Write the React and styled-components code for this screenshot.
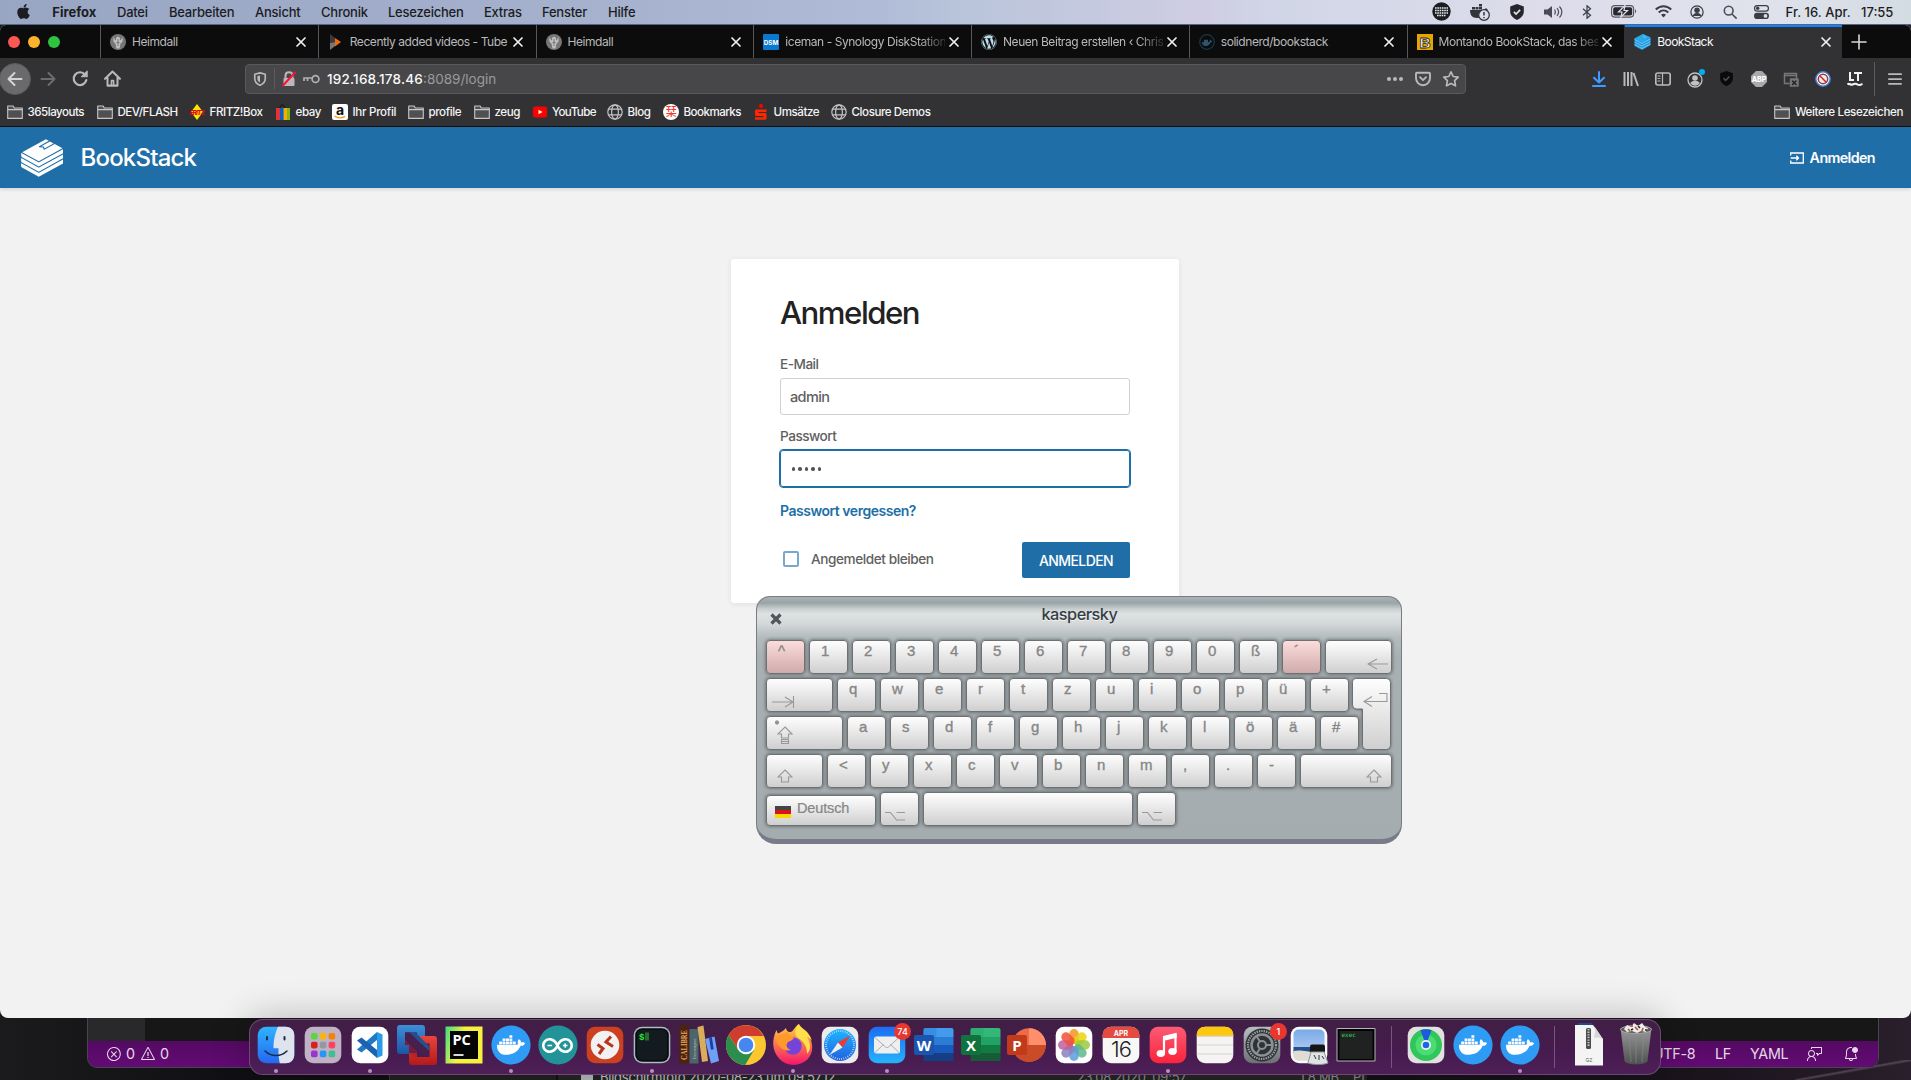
import React from "react";
import styled, { createGlobalStyle, css } from "styled-components";
import { FaApple, FaDocker, FaWordpress } from "react-icons/fa";
import { SiArduino, SiBookstack } from "react-icons/si";
import { VscBellDot, VscError, VscFeedback, VscWarning } from "react-icons/vsc";

const sans = `Inter, "Liberation Sans", "Noto Sans CJK JP", sans-serif`;
const blue = "#206ea7";

const GlobalStyle = createGlobalStyle`
  * { box-sizing: border-box; }
  body { margin: 0; background: #111115; overflow: hidden; }
  svg { display: block; flex: none; }
`;

const Screen = styled.div`
  position: relative;
  width: 1911px;
  height: 1080px;
  overflow: hidden;
  font-family: ${sans};
  background:
    linear-gradient(170deg, transparent 46%, rgba(190, 160, 185, 0.3) 50%, transparent 56%) 1795px 1060px / 116px 20px no-repeat,
    linear-gradient(90deg, #1b1b1d 0, #101014 12%, #0f0e14 60%, #1b141d 90%, #2a1f2c 100%);
`;

/* ---------- macOS menu bar ---------- */
const MenuBar = styled.header`
  display: flex;
  align-items: center;
  justify-content: space-between;
  height: 25px;
  padding: 0 14px 1px 16px;
  color: #1b1d22;
  font-size: 13px;
  border-bottom: 1px solid #56668a;
  background: linear-gradient(90deg, #98a5c3 0, #a6b2ce 33%, #b0bbd7 46%, #b8c4da 50%, #cfcde3 63%, #d1d6e7 67%, #dcdcea 80%, #e0e2ec 92%, #d3dbe3 100%);
`;
const MenuGroup = styled.div`
  display: flex;
  align-items: center;
`;
const MenuItem = styled.span`
  width: ${(p) => p.$w}px;
  white-space: nowrap;
  font-weight: ${(p) => (p.$bold ? 700 : 450)};
  letter-spacing: ${(p) => p.$ls ?? -0.23}px;
`;
const Slot = styled.span`
  display: flex;
  flex: none;
  align-items: center;
  justify-content: center;
  width: ${(p) => p.$w ?? 32}px;
  color: ${(p) => p.$color ?? "inherit"};
`;

/* ---------- Firefox window ---------- */
const Browser = styled.div`
  position: relative;
  z-index: 1;
  height: 993px;
  border-radius: 6px 6px 8px 8px;
  overflow: hidden;
  background: #f2f2f2;
`;
const TabStrip = styled.div`
  display: flex;
  height: 33px;
  background: #0c0c0d;
`;
const Lights = styled.div`
  display: flex;
  align-items: center;
  gap: 8px;
  width: 100px;
  padding-left: 8px;
`;
const Light = styled.i`
  width: 12px;
  height: 12px;
  border-radius: 50%;
  background: ${(p) => p.$c};
`;
const Tab = styled.div`
  display: flex;
  align-items: center;
  width: 217.75px;
  padding-left: 9px;
  font-size: 12px;
  color: ${(p) => (p.$active ? "#f9f9fa" : "#b9b9ba")};
  border-left: 1px solid ${(p) => (p.$active ? "#323234" : "#58585a")};
  ${(p) => p.$active && css`background: #323234; box-shadow: inset 0 2px #0a84ff;`}
`;
const TabTitle = styled.span`
  width: 159.5px;
  margin: 0 1px 0 6px;
  white-space: nowrap;
  letter-spacing: ${(p) => (p.$active ? -0.56 : -0.44)}px;
  ${(p) => p.$fade && css`mask-image: linear-gradient(90deg, #000 134px, rgba(0, 0, 0, 0.25) 158px);`}
`;
const NavBar = styled.div`
  display: flex;
  align-items: center;
  height: 41px;
  background: #323234;
  color: #b9b9ba;
`;
const Back = styled.span`
  display: flex;
  flex: none;
  align-items: center;
  justify-content: center;
  width: 32px;
  height: 32px;
  margin-left: -1px;
  border-radius: 50%;
  border: 1px solid #5b5b5d;
  background: #6a6a6c;
  color: #d4d4d5;
`;
const UrlBar = styled.div`
  display: flex;
  flex: none;
  align-items: center;
  width: 1221px;
  height: 30px;
  margin-left: 116.5px;
  border: 1px solid #59595c;
  border-radius: 4px;
  background: #474749;
  font-size: 13.5px;
`;
const UrlText = styled.span`
  flex: 1;
  white-space: nowrap;
  color: #9a9a9d;
  b { font-weight: 500; color: #f9f9fa; letter-spacing: 0.19px; }
`;
const VLine = styled.i`
  width: 1px;
  height: ${(p) => p.$h}px;
  background: #5c5c5f;
`;
const Tools = styled.div`
  display: flex;
  flex: none;
  align-items: center;
  margin-left: 117px;
`;
const Bookmarks = styled.div`
  display: flex;
  align-items: center;
  height: 28px;
  padding: 0 8px 1px 7px;
  background: #323234;
  border-bottom: 1px solid #0f0f10;
  color: #f4f4f5;
  font-size: 11.6px;
  font-weight: 500;
`;
const Bookmark = styled.span`
  display: flex;
  align-items: center;
  gap: 4.5px;
  width: ${(p) => (p.$w ? p.$w + "px" : "auto")};
  margin-left: ${(p) => (p.$push ? "auto" : 0)};
  white-space: nowrap;
  letter-spacing: ${(p) => p.$ls ?? -0.43}px;
`;

/* ---------- BookStack page ---------- */
const SiteHeader = styled.header`
  display: flex;
  align-items: center;
  height: 61px;
  padding: 0 36px 0 21px;
  background: ${blue};
  color: #fff;
  box-shadow: 0 1px 4px rgba(0, 0, 0, 0.15);
`;
const Logo = styled(SiBookstack)`
  width: 42px;
  height: 40px;
`;
const Brand = styled.span`
  margin-left: 17.5px;
  font-size: 24px;
  font-weight: 500;
  letter-spacing: -0.8px;
`;
const LoginLink = styled.a`
  display: flex;
  align-items: center;
  gap: 6px;
  margin-left: auto;
  font-size: 14.3px;
  font-weight: 600;
  letter-spacing: -0.62px;
`;
const Main = styled.main`
  display: flex;
  justify-content: center;
  padding: 71px 1px 0 0;
`;
const Card = styled.form`
  width: 448px;
  height: 344px;
  padding: 35px 49px 0;
  border-radius: 3px;
  background: #fff;
  color: #606060;
  font-size: 14px;
  box-shadow: 0 1px 6px rgba(0, 0, 0, 0.08);
`;
const Title = styled.h1`
  margin: 0;
  height: 57px;
  line-height: 38px;
  font-size: 31.2px;
  font-weight: 450;
  letter-spacing: -1.5px;
  color: #222;
`;
const Label = styled.label`
  display: block;
  height: 27px;
  line-height: 27px;
  font-size: 13.6px;
  font-weight: 450;
  letter-spacing: -0.5px;
`;
const Field = styled.div`
  display: flex;
  align-items: center;
  gap: 3px;
  height: 37px;
  margin-bottom: 8px;
  padding-left: 9px;
  border: 1px solid #d0d0d0;
  border-radius: 3px;
  font-size: 14.5px;
  font-weight: 450;
  letter-spacing: -0.65px;
  ${(p) => p.$focus && css`
    padding: 1px 0 0 11px;
    border-color: ${blue};
    outline: 1px solid ${blue};
  `}
`;
const Dot = styled.i`
  width: 3.4px;
  height: 3.4px;
  border-radius: 50%;
  background: #555;
`;
const Forgot = styled.a`
  display: block;
  margin-top: 14px;
  line-height: 20px;
  font-size: 14px;
  font-weight: 600;
  letter-spacing: -0.48px;
  color: ${blue};
`;
const FormFooter = styled.div`
  display: flex;
  align-items: center;
  margin-top: 21px;
`;
const Check = styled.i`
  width: 16px;
  height: 16px;
  margin: -3px 12px 0 3px;
  border: 2px solid #79a8ca;
  border-radius: 2px;
`;
const Remember = styled.span`
  margin-top: -2px;
  font-size: 13.6px;
  font-weight: 450;
  letter-spacing: -0.42px;
`;
const Submit = styled.button`
  width: 108px;
  height: 36px;
  margin-left: auto;
  padding: 0;
  border: 0;
  border-radius: 2px;
  background: ${blue};
  color: #fff;
  font: 500 14px ${sans};
  letter-spacing: -0.6px;
`;

/* ---------- On-screen keyboard ---------- */
const Keyboard = styled.section`
  position: absolute;
  z-index: 3;
  left: 756px;
  top: 596px;
  width: 646px;
  height: 248px;
  padding: 0 0 0 9px;
  border: 1px solid #777d80;
  border-bottom: 5px solid #777b8a;
  border-radius: 14px 14px 20px 20px;
  background: linear-gradient(180deg, #a9b2b5 0, #9aa4a7 6px, #c9cfd1 12px, #dfe2e3 17px, #d5d9da 26px, #b5bcbe 40px, #a9b0b3 60px, #a5acaf 100%);
  color: #868686;
  font-family: "Liberation Sans", Arial, sans-serif;
`;
const KeyboardTop = styled.div`
  display: flex;
  height: 43px;
  padding: 16px 0 0 4px;
`;
const KLogo = styled.span`
  margin: -11px 0 0 259.5px;
  font: 450 16.3px/24px ${sans};
  letter-spacing: -0.5px;
  color: #353d44;
  text-shadow: 0 1px #f4f4f4;
`;
const KeyRow = styled.div`
  display: flex;
  align-items: flex-end;
  gap: 4.5px;
  height: 34px;
  margin-bottom: 4px;
`;
const Key = styled.span`
  display: flex;
  flex: none;
  width: ${(p) => p.$w ?? 38.5}px;
  height: ${(p) => p.$h ?? 34}px;
  padding: 1px 0 0 11px;
  border: 1px solid #6d7173;
  border-radius: 4px;
  background: ${(p) => (p.$dead ? "linear-gradient(#fcdcdc, #cfabab)" : "linear-gradient(#fefefe, #cfcfcf)")};
  box-shadow: 0 0 3px 1px rgba(70, 76, 79, 0.55);
  font-size: 15px;
  line-height: 18px;
  -webkit-text-stroke: 0.35px #868686;
`;
const KeyIcon = styled.svg`
  margin: ${(p) => p.$m};
  fill: none;
  stroke: #999;
  stroke-width: 1.1;
`;
const Middle = styled.div`
  display: flex;
  height: 76px;
`;
const Enter = styled.svg`
  margin-left: -6.5px;
  overflow: visible;
  filter: drop-shadow(0 0 1.5px rgba(70, 76, 79, 0.8));
`;
const Flag = styled.i`
  width: 16px;
  height: 12px;
  margin: 9px 6px 0 -3px;
  background: linear-gradient(#444 4px, #d8131b 4px 8px, #f7d900 8px);
`;
const Lang = styled.span`
  padding-top: 2px;
  font-size: 14.5px;
  letter-spacing: -0.15px;
  -webkit-text-stroke: 0.2px #868686;
`;

/* ---------- Windows behind the browser ---------- */
const CodeWindow = styled.div`
  position: absolute;
  left: 87px;
  top: 1000px;
  width: 1792px;
  height: 68px;
  display: flex;
  flex-direction: column;
  justify-content: flex-end;
  border: 1px solid #4a4450;
  border-radius: 0 0 10px 10px;
  overflow: hidden;
  background: linear-gradient(90deg, #29292b 57px, #171718 57px);
`;
const StatusBar = styled.div`
  display: flex;
  align-items: center;
  height: 26px;
  padding: 0 18px 1px;
  background: linear-gradient(#540a62, #620b74);
  color: #e6d8ea;
  font-size: 14.3px;
`;
const StatusItem = styled.span`
  display: flex;
  width: ${(p) => p.$w}px;
  margin-left: ${(p) => (p.$push ? "auto" : 0)};
  letter-spacing: -0.3px;
`;
const FinderWindow = styled.div`
  position: absolute;
  left: 389px;
  top: 1060px;
  width: 978px;
  height: 40px;
  display: flex;
  padding-top: 9px;
  border-left: 1px solid #3a3a3a;
  background: linear-gradient(90deg, #222 166px, #111 166px 168px, #262627 168px);
  font-size: 13px;
  line-height: 16px;
  white-space: nowrap;
`;
const FinderCell = styled.span`
  width: ${(p) => p.$w}px;
  color: ${(p) => (p.$dim ? "#8f8f8f" : "#c9c9c9")};
  letter-spacing: -0.22px;
`;
const FileThumb = styled.i`
  width: 12px;
  height: 14px;
  margin: 4px 7px 0 191px;
  background: #b9bcc0;
`;

/* ---------- Dock ---------- */
const Dock = styled.nav`
  position: absolute;
  z-index: 4;
  left: 249px;
  top: 1019px;
  width: 1412px;
  height: 56px;
  display: flex;
  padding-left: 2.5px;
  border: 1px solid rgba(150, 115, 155, 0.5);
  border-radius: 14px;
  background: linear-gradient(180deg, #411f45 0, #461b4e 55%, #4d1f57 100%);
  box-shadow: 0 0 36px 2px rgba(0, 0, 0, 0.24);
`;
const DockItem = styled.span`
  position: relative;
  display: flex;
  justify-content: center;
  flex: none;
  width: 46.97px;
  padding-top: 5px;
  ${(p) => p.$running && css`
    &::after {
      content: "";
      position: absolute;
      left: calc(50% - 2px);
      bottom: 1px;
      width: 4px;
      height: 4px;
      border-radius: 50%;
      background: #b68fc0;
    }
  `}
`;
const Divider = styled.i`
  width: 1px;
  height: 42px;
  margin: 6px ${(p) => p.$r}px 0 ${(p) => p.$l}px;
  background: #77557d;
`;
const Badge = styled.b`
  position: absolute;
  right: -1px;
  top: 3px;
  width: 17px;
  height: 17px;
  border-radius: 50%;
  background: #e8372f;
  color: #fff;
  font-size: 9px;
  font-weight: 500;
  line-height: 17px;
  text-align: center;
`;
const Overlay = styled.span`
  position: absolute;
  inset: 0;
  top: ${(p) => p.$t ?? 0}px;
  display: flex;
  align-items: center;
  justify-content: center;
  color: #fff;
`;

/* ---------- small drawings ---------- */
const Line = ({ s = 16, w = 2, children, ...r }) => (
  <svg width={s} height={s} viewBox="0 0 16 16" fill="none" stroke="currentColor" strokeWidth={w} strokeLinecap="round" strokeLinejoin="round" {...r}>{children}</svg>
);
const Close = () => <Line s={16} w={1.7} color="#f2f2f2"><path d="M4 4l8 8M12 4l-8 8" /></Line>;
const Folder = () => (
  <Line w={1.1} color="#c6c6c8" strokeLinecap="butt"><path d="M.7 14V2h5.5l1 2h8.1v10.4H.7z" fill="#505052" /><path d="M.7 5.6h14.6" /></Line>
);
const Globe = () => (
  <Line w={1.2} color="#c4c4c6"><circle cx="8" cy="8" r="7.2" /><ellipse cx="8" cy="8" rx="3.4" ry="7.2" /><path d="M1.4 5.2h13.2M1.4 10.8h13.2" /></Line>
);
const Shield = ({ fill, tick, s = 16 }) => (
  <svg width={s} height={s} viewBox="0 0 16 16"><path d="M8 0l6.8 2.4v5.2c0 4-3 6.8-6.8 8.4-3.8-1.6-6.8-4.4-6.8-8.4V2.4z" fill={fill} /><path d="M4.9 7.8l2.2 2.3 4-4.2" fill="none" stroke={tick} strokeWidth="1.7" /></svg>
);
const Heimdall = () => (
  <svg width="16" height="16" viewBox="0 0 16 16"><circle cx="8" cy="8" r="8" fill="#777" /><path d="M4 3c-1.500 3-.5 5.500 1.500 6.500l1 5h3l1-5C12.500 8.500 13.500 6 12 3c0 2-1 3-2 3.500V4L8 2.500 6 4v2.500C5 6 4 5 4 3z" fill="#c0c0c0" /><path d="M8 5v7M6.500 8.500h3" stroke="#777" /></svg>
);
const Tube = () => <svg width="16" height="16" viewBox="0 0 16 16"><path d="M2 0l5 4v4L2 9z" fill="#3a3a3a" /><path d="M2 9l5-1v4l-5 4z" fill="#777" /><path d="M7 4l6 4-6 4.500z" fill="#f1680d" /></svg>;
const Dsm = () => <svg width="16" height="16"><rect width="16" height="16" rx="1" fill="#0b78d0" /><text x="8" y="10.500" fontSize="6.300" fontFamily="Inter" fontWeight="700" fill="#fff" textAnchor="middle">DSM</text></svg>;
const WhaleRing = () => <svg width="16" height="16" viewBox="0 0 16 16"><circle cx="8" cy="8" r="7.300" fill="none" stroke="#1d3647" strokeWidth="1.200" /><path d="M3 8h7.500c0-1 .5-2 1-2.500.8.600.9 1.200.9 1.800.8 0 1 .3 1 .3-.6 1-1.500 1.100-2 1.100-1 2.500-3 3.300-5 3.300C4.300 12 3 10.500 3 8zM5 5.700h4V8H5z" fill="#2c5470" /></svg>;
const Montando = () => <svg width="16" height="16"><rect width="16" height="16" fill="#e7a500" /><text x="8" y="13.500" fontSize="15.500" fontFamily="Liberation Sans" fontWeight="700" fill="#fff" stroke="#222" strokeWidth=".8" textAnchor="middle">B</text></svg>;
const BookCube = () => (
  <svg width="17" height="16" viewBox="0 0 17 16"><path d="M.5 4.500L9 0l7.500 3.500v7.800L8 16 .5 12z" fill="#1b9be0" /><path d="M.5 4.500L9 0l7.500 3.500L8 8.500z" fill="#2aa8ea" /><path d="M.5 5.500L8 9.500l8.500-4.600M.5 8L8 12l8.500-4.600M.5 10.500L8 14.500l8.500-4.600M9 2l3 1.500" fill="none" stroke="#8fd0f3" strokeWidth=".8" /></svg>
);
const Fritz = () => <svg width="16" height="16" viewBox="0 0 16 16"><path d="M8 0l6 8-6 8-6-8z" fill="#ffe600" /><text x="8" y="10.500" fontSize="6.500" fontFamily="Inter" fontStyle="italic" fontWeight="800" fill="#e2001a" textAnchor="middle" textLength="15">FRITZ</text></svg>;
const Bag = () => <svg width="16" height="16" viewBox="0 0 16 16"><path d="M5 4c0-4 5-4 5 0" stroke="#111" fill="none" /><path d="M1 4h4v12H1z" fill="#e53238" /><path d="M5 4h3.500v12H5z" fill="#0064d2" /><path d="M8.500 4H12v12H8.500z" fill="#f5af02" /><path d="M12 4h3v12h-3z" fill="#86b817" /></svg>;
const Amazon = () => <svg width="16" height="16"><rect width="16" height="16" rx="2" fill="#fff" /><text x="8" y="10.500" fontSize="14" fontFamily="Inter" fontWeight="700" fill="#111" textAnchor="middle">a</text><path d="M2.500 12c3.500 2.300 7.500 2.300 10.500.3" stroke="#f90" strokeWidth="1.400" fill="none" /></svg>;
const Youtube = () => <svg width="16" height="16"><rect x="1" y="2.500" width="14" height="11" rx="2.500" fill="#f00" /><path d="M6.500 5.700l4 2.300-4 2.300z" fill="#fff" /></svg>;
const Kanji = () => <svg width="16" height="16"><circle cx="8" cy="8" r="8" fill="#fff" /><text x="8" y="12" fontSize="11" fontFamily="Noto Sans CJK JP" fontWeight="500" fill="#f03a2e" textAnchor="middle">栞</text></svg>;
const Sparkasse = () => <svg width="16" height="16" viewBox="0 0 16 16"><circle cx="8" cy="2" r="2" fill="red" /><path d="M2.500 5.500h11v2.500H5.500v1H12c1 0 1.500.5 1.500 1.500V14c0 1-.5 1.700-1.500 1.700H2v-2.500h8.500v-1.200H4c-1 0-2-.5-2-1.500V7c0-1 .5-1.500 1.500-1.500z" fill="#ff2600" /></svg>;

const tabs = [
  ["Heimdall", <Heimdall />],
  ["Recently added videos - Tube", <Tube />],
  ["Heimdall", <Heimdall />],
  ["iceman - Synology DiskStation", <Dsm />, true],
  ["Neuen Beitrag erstellen ‹ Chris", <FaWordpress size={16} color="#b9dcea" />, true],
  ["solidnerd/bookstack", <WhaleRing />],
  ["Montando BookStack, das bes", <Montando />, true],
];
const bookmarks = [
  ["365layouts", 90, <Folder />, -0.5],
  ["DEV/FLASH", 92, <Folder />, -0.55],
  ["FRITZ!Box", 86, <Fritz />],
  ["ebay", 57, <Bag />],
  ["Ihr Profil", 76, <Amazon />, -0.3],
  ["profile", 66, <Folder />],
  ["zeug", 57.5, <Folder />],
  ["YouTube", 75.5, <Youtube />, -0.6],
  ["Blog", 56, <Globe />],
  ["Bookmarks", 90, <Kanji />, -0.55],
  ["Umsätze", 78, <Sparkasse />],
  ["Closure Demos", 110, <Globe />],
];
const menus = [["Datei", 52], ["Bearbeiten", 86], ["Ansicht", 66], ["Chronik", 67], ["Lesezeichen", 96], ["Extras", 58], ["Fenster", 66], ["Hilfe", 40]];

/* ---------- dock icons, 40 × 40 ---------- */
const Ico = ({ children, ...r }) => <svg width="40" height="40" viewBox="0 0 40 40" {...r}>{children}</svg>;
const Tile = ({ fill }) => <rect x="1.700" y="1.700" width="36.600" height="36.600" rx="8.500" fill={fill} />;

const gradients = [["gFind", "#2fb4ff", "#2567f0"], ["gMail", "#1d6cf2", "#25b3fb"], ["gMusic", "#fb5c74", "#fa233b"], ["gFox", "#ffd43b", "#f5156c"], ["gPc", "#3ddc84", "#f6f23c"], ["gSafari", "#1fb6ff", "#2260e0"], ["gTrash", "#9a9a9a", "#4f5050"], ["gGear", "#b7bec2", "#6d7072"], ["gSky", "#7aa9e8", "#c4dbf5"], ["gVmB", "#3d8fd8", "#1b55a5"], ["gVmR", "#e8453a", "#b41a1a"]];
const Gradients = () => (
  <svg width="0" height="0">
    <defs>
      {gradients.map(([id, a, b]) => (
        <linearGradient key={id} id={id} x1="0" y1="0" x2={id === "gPc" ? 1 : 0} y2={id === "gPc" ? 0.3 : 1}><stop stopColor={a} /><stop offset={id === "gPc" ? 0.5 : 1} stopColor={b} /></linearGradient>
      ))}
    </defs>
  </svg>
);
const Finder = () => <Ico><Tile fill="url(#gFind)" /><path d="M22 1.700c-3 7-4.500 13-4.500 21.500h5c-.3 6 .3 10 1.300 15.100h6c5 0 8.500-3.500 8.500-8.500V10.200c0-5-3.500-8.500-8.500-8.500z" fill="#dfe3ee" /><path d="M11 12v2.500M28.500 12v2.500" stroke="#1b2c4a" strokeWidth="2" strokeLinecap="round" /><path d="M9 26c6 6 16 6 22 0" fill="none" stroke="#1b2c4a" strokeWidth="1.500" strokeLinecap="round" /></Ico>;
const launch = ["#5ad53b", "#fbb40d", "#f58109", "#d6231d", "#929aa0", "#fb4460", "#9934cf", "#2598f5", "#3dc08f"];
const Launchpad = () => <Ico><Tile fill="#bfb2c4" />{launch.map((c, i) => <rect key={c} x={8 + (i % 3) * 8.8} y={8 + Math.floor(i / 3) * 8.8} width="6.600" height="6.600" rx="1.800" fill={c} />)}</Ico>;
const Code = () => <Ico><Tile fill="#fff" /><path d="M27 7l5.500 2.500v21L27 33z" fill="#2a9be8" /><path d="M27 7v8L11.500 27.500 7 24.500z" fill="#1f78c8" /><path d="M27 33v-8L11.500 12.500 7 15.500z" fill="#1c62b0" /></Ico>;
const Vm = () => (
  <Ico>
    <path d="M3 0h22a3 3 0 013 3v8h-8V7.500H8V20h4v9H3a3 3 0 01-3-3V3a3 3 0 013-3z" fill="url(#gVmB)" />
    <path d="M20 11h17a3 3 0 013 3v23a3 3 0 01-3 3H15a3 3 0 01-3-3v-9h8v4h12.500V18.500H24l-6-6z" fill="url(#gVmR)" />
    <path d="M8 7.500h5L31 25v6.500h-4L8 12.500z" fill="#46204f" />
    <path d="M12.500 7.500h6L32 21v5z" fill="#24508f" />
    <path d="M8 14l12 12v6h-3l-5-4v-8H8z" fill="#a02030" opacity=".5" />
  </Ico>
);
const PyCharm = () => <Ico><rect x="1.500" y="1.500" width="37" height="37" fill="url(#gPc)" /><rect x="6" y="6" width="28" height="28" fill="#050505" /><text x="8.500" y="19.500" fontFamily="Open Sans" fontWeight="700" fontSize="14.500" fill="#fff">PC</text><path d="M9.500 30h10" stroke="#fff" strokeWidth="1.700" /></Ico>;
const Disc = ({ fill }) => <Ico><circle cx="20" cy="20" r="19.600" fill={fill} /></Ico>;
const Docker = () => <><Disc fill="#2e9bf5" /><Overlay $t={-4}><FaDocker size={28} /></Overlay></>;
const Arduino = () => <><Disc fill="#23939a" /><Overlay $t={-4}><SiArduino size={31} /></Overlay></>;
const Remote = () => <Ico><Tile fill="#cc4020" /><circle cx="20" cy="20" r="14.300" fill="#f2f2f2" /><path d="M12.500 19.500l5.500 4-4 5.500M26 11.500l-5 5.500 7 4.500" fill="none" stroke="#b8341a" strokeWidth="3" /></Ico>;
const Terminal = () => <Ico><Tile fill="#a9bcc0" /><rect x="3.200" y="3.200" width="33.600" height="33.600" rx="7" fill="#070c0e" /><rect x="5" y="5" width="30" height="30" rx="5" fill="#141b20" /><text x="7" y="14.500" fontFamily="Liberation Mono" fontWeight="700" fontSize="9" fill="#2fe33c">$</text><rect x="13" y="7.500" width="4" height="8" fill="#21702a" /></Ico>;
const Calibre = () => <Ico><path d="M0 0h10v38.500H0z" fill="#4a2411" /><path d="M10.500 4h9v34.500h-9z" fill="#4d6569" /><path d="M18.500 2l6-1.500 4.500 35.500-6 1z" fill="#d8ae5c" /><path d="M26 14l9.500-2.500L40 36l-8 2.500z" fill="#6fa0f7" /><path d="M31.500 12.500l1.800 12" stroke="#1f3ca8" strokeWidth="2.800" /><text transform="translate(7.700 35) rotate(-90)" fontFamily="Liberation Serif" fontWeight="700" fontSize="7.500" fill="#e9a95b" textLength="30" lengthAdjust="spacingAndGlyphs">CALIBRE</text><text transform="translate(16.500 34) rotate(-90)" fontFamily="Liberation Serif" fontSize="5" fill="#b2c3c4" textLength="21">Бекмирис</text></Ico>;
const Chrome = () => <Ico><circle cx="20" cy="20" r="20" fill="#fbc62f" /><path d="M2.700 10a20 20 0 0016.500 30L28 25l-16-1z" fill="#2b8e4c" /><path d="M2.700 10L12.500 24.500 20 11h17.500A20 20 0 002.700 10z" fill="#cf3d31" /><circle cx="20" cy="20" r="9.200" fill="#fff" /><circle cx="20" cy="20" r="7.300" fill="#4587ee" /></Ico>;
const Firefox = () => <Ico overflow="visible"><path d="M25.500-1c1.500 4 5 6 8 9 8 9 7 20 1 26.500-8 7.500-21 7-28-.5C-1 26-1.500 15 3.500 5c.5 2 1 3 2 3.500C8 6.500 11 6 13 3c.2 2 1.500 3.500 3 4 3 .5 4.500-2 5-3 1.500-2 3-3.500 4.500-5z" fill="url(#gFox)" /><path d="M26-1c2 5 10 6 13 17-2-3-4-4-5-4 4 6 4 13 0 17 0-9-4-13-10-17-3-4-2-8 2-13z" fill="#ffe04a" /><circle cx="20" cy="21" r="8.700" fill="#7543d8" /><path d="M3 13c3-3 5-4 8-4l4-3c0 2 0 3 1 4 2 2 5 2 5 3-1 2-4 3-6 4-3 3-1 7 3 8-7 2-14-3-15-12z" fill="#ff9a2a" /></Ico>;
const Safari = () => <Ico><Tile fill="#ececec" /><circle cx="20" cy="20" r="16" fill="url(#gSafari)" /><circle cx="20" cy="20" r="14" fill="none" stroke="#cbe6ff" strokeWidth="2" strokeDasharray=".7 1.500" /><path d="M30.500 10.500L18 17.500l4.500 5z" fill="#ee3a35" /><path d="M9.500 30l8.500-12.500 4.500 5z" fill="#eee" /></Ico>;
const Mail = () => <Ico><Tile fill="url(#gMail)" /><rect x="7" y="11.500" width="26" height="17" rx="2.500" fill="#efefef" /><path d="M8 12.500l10.500 9.500c1 .8 2 .8 3 0L32 12.500M8 27.500l8.500-8M32 27.500l-8.500-8" fill="none" stroke="#a9adb2" strokeWidth="1" /></Ico>;
const Office = ({ letter, colors: [a, b, c, d, box], round }) => (
  <Ico>
    {round ? <><circle cx="22" cy="20" r="16.800" fill={b} /><path d="M22 3.200v17h17A17 17 0 0022 3.200z" fill={a} /><path d="M5.200 20h33.600a16.800 16.800 0 01-33.600 0z" fill={c} /></> : <><path d="M10.500 3h27a2 2 0 012 2v7h-30V5z" fill={a} /><path d="M9.500 12h30v8h-30z" fill={b} /><path d="M9.500 20h30v8h-30z" fill={c} /><path d="M9.500 28h30v8h-30z" fill={d} /><path d="M9.500 3h13v17h-13z" fill={b} opacity=".4" /></>}
    <rect x="0" y="10" width="20" height="20" rx="2" fill={box} />
    <text x="10" y="25.500" textAnchor="middle" fontFamily="Open Sans" fontWeight="700" fontSize="15" fill="#fff">{letter}</text>
  </Ico>
);
const petals = ["#f7941d", "#e8d50f", "#9bca3c", "#5eb989", "#5b9fd9", "#8c7fc0", "#c0609d", "#f0503c"];
const Photos = () => <Ico><Tile fill="#fff" />{petals.map((c, i) => <rect key={c} x="15.300" y="4" width="9.400" height="15" rx="4.700" fill={c} opacity=".85" transform={`rotate(${i * 45} 20 20)`} />)}</Ico>;
const Calendar = () => <Ico><Tile fill="#f7f7f5" /><path d="M1.700 13V10.200c0-5 3.500-8.500 8.500-8.500h19.600c5 0 8.500 3.500 8.500 8.500V13z" fill="#e54a40" /><text x="20" y="10.500" textAnchor="middle" fontFamily="Inter" fontWeight="700" fontSize="7" fill="#fff">APR</text><text x="20" y="32" textAnchor="middle" fontFamily="Inter" fontWeight="300" fontSize="22" letterSpacing="-1" fill="#222">16</text></Ico>;
const Music = () => <Ico><Tile fill="url(#gMusic)" /><path d="M16 12.500v16M27.500 9v18" fill="none" stroke="#fff" strokeWidth="2.200" /><path d="M15 11l13.600-3.300v5L15 16z" fill="#fff" /><ellipse cx="12.800" cy="28.500" rx="4.200" ry="3.400" fill="#fff" /><ellipse cx="24.500" cy="26.500" rx="4.200" ry="3.400" fill="#fff" /></Ico>;
const Notes = () => <Ico><Tile fill="#f5f4f2" /><path d="M1.700 10.500C1.700 5 5 1.700 10.200 1.700h19.600c5 0 8.500 3.300 8.500 8.800z" fill="#fdc70c" /><path d="M1.700 11h36.600" stroke="#b99b2c" strokeWidth=".6" /><path d="M2 20h36M2 29h36" stroke="#d5d3d0" /></Ico>;
const Settings = () => <Ico><Tile fill="url(#gGear)" /><circle cx="20" cy="20" r="16.500" fill="#303336" /><circle cx="20" cy="20" r="14" fill="none" stroke="#9aa0a3" strokeWidth="2.200" strokeDasharray="1.400 1" /><circle cx="20" cy="20" r="10.500" fill="none" stroke="#8b9194" strokeWidth="2.500" /><circle cx="20" cy="20" r="4" fill="none" stroke="#8b9194" strokeWidth="2" /><path d="M24 20h7M18 16.500l-4-6M18 23.500l-4 6" stroke="#8b9194" strokeWidth="2" /></Ico>;
const Preview = () => <Ico><Tile fill="#fafafa" /><rect x="4.500" y="4.500" width="31" height="31" rx="5" fill="url(#gSky)" /><path d="M4.500 22h31v6h-31z" fill="#24518b" /><path d="M4.500 26c8-2 14 2 31 1v3a5 5 0 01-5 5.500h-21a5 5 0 01-5-5.500z" fill="#e2ddd3" /><rect x="21" y="19.500" width="15" height="8" rx="2" fill="#161616" /><path d="M22 27h13l4 11c-5 2-15 2-20 0z" fill="#dfe5e6" stroke="#8d9799" /><path d="M25 30l2 4M30 30v5M33 31l2 3" stroke="#333" /></Ico>;
const Exec = () => <Ico><rect x=".5" y="3" width="39" height="33.500" rx="1" fill="#b4b6b8" /><rect x="1.500" y="4" width="37" height="31.500" fill="#030303" /><rect x="3.500" y="6" width="33" height="28" fill="#202121" /><text x="5.500" y="11.500" fontFamily="DejaVu Sans Mono" fontSize="6" fill="#38d65a">exec</text></Ico>;
const FindMy = () => <Ico><Tile fill="#e3e1e0" /><circle cx="20" cy="20" r="16" fill="#31c65b" /><circle cx="20" cy="20" r="10.500" fill="#4bdc73" /><path d="M20 20L14.500 5.200a16 16 0 0111 0z" fill="#1c5bdc" /><circle cx="20" cy="20" r="5" fill="#f3f3f3" /><circle cx="20" cy="20" r="3.300" fill="#1e66e8" /></Ico>;
const Zip = () => <Ico overflow="visible"><path d="M9-2h14v4H9z" fill="#195083" /><path d="M6 0h18l10 14v26.500H6z" fill="#f4f4f4" /><path d="M24-1c3 3 2 9 1 14 3-1 6-1 9 1.500z" fill="#d8d8d8" /><rect x="17" y="3" width="5" height="21" rx="1.500" fill="#4a4d50" /><path d="M19.500 4v17" stroke="#ccc" strokeWidth="2" strokeDasharray="1.300 1.300" /><text x="20" y="37" textAnchor="middle" fontFamily="Inter" fontSize="5" fill="#666">GZ</text></Ico>;
const Trash = () => <Ico overflow="visible"><path d="M4.500 3h31l-4 33c-1 4.500-22 4.500-23 0z" fill="url(#gTrash)" /><path d="M13 9l2 28M20 10v28M28 9l-2 28" stroke="#8a8c8c" strokeWidth="1.500" opacity=".4" /><ellipse cx="20" cy="4.500" rx="15.500" ry="4" fill="#5b5b5b" stroke="#a5a5a5" /><path d="M8 4l3-4 4 2 3-4 4 3 4-3 3 4 3 1-2 4-5-1-4 2-5-2-5 1z" fill="#ececec" /><path d="M12 4l2 2M19 2l3 3M27 3l-1 3M16 0v2" stroke="#b15022" strokeWidth="1.500" /><path d="M22 1l2 2M15 5l2-1M29 5l2 0" stroke="#222" strokeWidth="1.500" /></Ico>;

const dock = [
  [<Finder />, 1], [<Launchpad />], [<Code />, 1], [<Vm />], [<PyCharm />], [<Docker />, 1], [<Arduino />], [<Remote />],
  [<Terminal />, 1], [<Calibre />], [<Chrome />], [<Firefox />, 1], [<Safari />], [<><Mail /><Badge>74</Badge></>, 1],
  [<Office letter="W" colors={["#429bec", "#2b7cd3", "#185abd", "#153e85", "#1a55b0"]} />],
  [<Office letter="X" colors={["#35b877", "#21a366", "#107c41", "#185c37", "#10733d"]} />],
  [<Office letter="P" round colors={["#ff8f6b", "#ed6c47", "#cb4a28", "#d35230", "#c13a1b"]} />],
  [<Photos />], [<Calendar />], [<Music />, 1], [<Notes />], [<><Settings /><Badge>1</Badge></>], [<Preview />], [<Exec />],
];

const Letters = ({ chars, dead = "" }) => [...chars].map((c) => <Key key={c} $dead={dead.includes(c)}>{c}</Key>);
const Shift = ({ m }) => <KeyIcon $m={m} width="16" height="14"><path d="M8 1l7 7h-3.500v5h-7V8H1z" /></KeyIcon>;
const Option = () => <Key><KeyIcon $m="17px 0 0 -7px" width="21" height="10"><path d="M0 1.500h5.500l6 7.500H20M11.500 1.500H20" /></KeyIcon></Key>;

export default function App() {
  return (
    <Screen>
      <GlobalStyle />
      <Gradients />
      <MenuBar>
        <MenuGroup>
          <Slot $w={15}><FaApple size={17} /></Slot>
          <MenuItem $w={21.3} />
          <MenuItem $w={64.7} $bold $ls={0}>Firefox</MenuItem>
          {menus.map(([t, w]) => <MenuItem key={t} $w={w}>{t}</MenuItem>)}
        </MenuGroup>
        <MenuGroup>
          <Slot $w={38}><svg width="19" height="19" viewBox="0 0 19 19"><circle cx="9.500" cy="9.500" r="9.200" fill="#1c1d21" /><path d="M3 6h13M3 8.500h13M3 11h13M5 13.500h9" stroke="#e8e9f2" strokeWidth="1.500" strokeDasharray="1.600 .7" /></svg></Slot>
          <Slot $w={40}><svg width="20" height="18" viewBox="0 0 20 18"><path d="M0 7h14l2-2 2 2c-1 1-2 1-3 1-2 5-5 7-8 7C2 15 0 12 0 7zM2 4h3v2.500H2zM5.500 4h3v2.500h-3zM9 4h3v2.500H9zM9 1h3v2.500H9z" fill="#33353b" /><circle cx="14" cy="12" r="5.300" fill="#dcdcea" stroke="#33353b" strokeWidth="1.300" /><path d="M14 9v3.500M14 14v1.200" stroke="#33353b" strokeWidth="1.500" /></svg></Slot>
          <Slot $w={34}><Shield fill="#24262b" tick="#dfe0ea" /></Slot>
          <Slot $w={39}><svg width="19" height="14" viewBox="0 0 19 14" fill="none" stroke="#4a4c55" strokeWidth="1.200"><path d="M0 4.500h3.500L8 1v12L3.500 9.500H0z" fill="#4a4c55" stroke="none" /><path d="M10.500 4.500c1 1.500 1 3.500 0 5M13 3c2 2.500 2 5.500 0 8M15.500 1.500c3 3.500 3 7.500 0 11" /></svg></Slot>
          <Slot $w={28}><svg width="10" height="14" viewBox="0 0 10 14" fill="none" stroke="#3b3d45" strokeWidth="1.200"><path d="M1 3.700l7.500 6.600L5 13.300V.7l3.500 3L1 10.300" /></svg></Slot>
          <Slot $w={45}><svg width="26" height="13" viewBox="0 0 26 13"><rect x=".6" y=".6" width="22" height="11.500" rx="3" fill="none" stroke="#55575f" strokeWidth="1.100" /><rect x="2.200" y="2.200" width="19" height="8.400" rx="1.800" fill="#26282d" /><path d="M24 4.300c1.500.5 1.500 3.500 0 4z" fill="#55575f" /><path d="M14 .5L7.500 7H11l-1 5 6.500-6.500H13z" fill="#26282d" stroke="#dcdcea" strokeWidth="1.200" /></svg></Slot>
          <Slot $w={34}><svg width="17" height="13" viewBox="0 0 17 13" fill="none" stroke="#3b3d45" strokeWidth="2"><path d="M.8 4.500c4.500-4.300 10.900-4.300 15.400 0M3.700 7.500c2.900-2.700 6.700-2.700 9.600 0" /><path d="M8.500 12.500L6 9.800c1.500-1.300 3.500-1.300 5 0z" fill="#3b3d45" stroke="none" /></svg></Slot>
          <Slot $w={33}><Line s={14} w={1.4} color="#3b3d45"><circle cx="8" cy="8" r="7" /><circle cx="8" cy="6" r="2.400" fill="currentColor" /><path d="M4 12c1-3 7-3 8 0z" fill="currentColor" /></Line></Slot>
          <Slot $w={33}><Line s={14} w={1.8} color="#4a4c55"><circle cx="6.500" cy="6.500" r="5" /><path d="M10.500 10.500l4.500 4.500" /></Line></Slot>
          <Slot $w={31}><svg width="15" height="14" viewBox="0 0 15 14"><rect x=".6" y=".6" width="13.800" height="5.500" rx="2.700" fill="none" stroke="#3b3d45" strokeWidth="1.200" /><circle cx="3.700" cy="3.300" r="1.700" fill="#3b3d45" /><rect y="7.800" width="15" height="6.200" rx="3.100" fill="#3b3d45" /><circle cx="11.500" cy="10.900" r="1.900" fill="#dcdcea" /></svg></Slot>
          <MenuItem $w={8.5} />
          <MenuItem $w={75.5} $ls={0.05}>Fr. 16. Apr.</MenuItem>
          <MenuItem $w={36} $ls={0}>17:55</MenuItem>
        </MenuGroup>
      </MenuBar>

      <Browser>
        <TabStrip>
          <Lights><Light $c="#fc5753" /><Light $c="#fdb32b" /><Light $c="#2fc440" /></Lights>
          {tabs.map(([t, icon, fade], i) => <Tab key={i}>{icon}<TabTitle $fade={fade}>{t}</TabTitle><Close /></Tab>)}
          <Tab $active><BookCube /><TabTitle $active>BookStack</TabTitle><Close /></Tab>
          <Slot $w={33}><Line s={16} w={1.6} color="#d8d8d8"><path d="M8 1v14M1 8h14" /></Line></Slot>
        </TabStrip>
        <NavBar>
          <Back><Line><path d="M1.500 8h13M7.500 2L1.500 8l6 6" /></Line></Back>
          <Slot $color="#6c6c6e" $w={33}><Line><path d="M1.500 8h13M8.500 2l6 6-6 6" /></Line></Slot>
          <Slot><Line s={17} w={2.1}><path d="M13.500 9.500a6 6 0 11-1.300-5.300" /><path d="M14.300 1v5.300H9z" fill="currentColor" strokeWidth="1" /></Line></Slot>
          <Slot><Line s={17} w={1.9}><path d="M1 8.300L8 1.500l7 6.800M3.300 7.500v7.200h9.400V7.500" /><path d="M7 14.500V10h2v4.500" strokeWidth="1.500" /></Line></Slot>
          <UrlBar>
            <Slot $w={28}><Line s={14} w={1.9}><path d="M8 1l6 1.500v5C14 12 11 14 8 15.200 5 14 2 12 2 7.500v-5z" /><path d="M8 4v8C6 11 5 10 5 7.500V4.700z" fill="currentColor" stroke="none" /></Line></Slot>
            <VLine $h={21} />
            <Slot $w={28}><svg width="16" height="16" viewBox="0 0 16 16"><path d="M4.500 7V4.500c0-4.500 7-4.500 7 0V7" fill="none" stroke="#b9b9ba" strokeWidth="2" /><rect x="2.500" y="7" width="11" height="8" rx="1" fill="#b9b9ba" /><path d="M1.500 15L14.500 1" stroke="#ff0f39" strokeWidth="2" /></svg></Slot>
            <Slot $w={18}><svg width="17" height="10" viewBox="0 0 17 10" fill="none" stroke="#b0b0b1" strokeWidth="1.700"><circle cx="12.500" cy="5" r="3.400" /><path d="M9 4H1v3M4.500 4v3" /></svg></Slot>
            <Slot $w={6.5} />
            <UrlText><b>192.168.178.46</b>:8089/login</UrlText>
            <Slot $w={28}><svg width="16" height="4"><circle cx="2" cy="2" r="2" fill="#b9b9ba" /><circle cx="8" cy="2" r="2" fill="#b9b9ba" /><circle cx="14" cy="2" r="2" fill="#b9b9ba" /></svg></Slot>
            <Slot $w={28}><Line w={1.9}><path d="M2 1.700h12c.6 0 1 .4 1 1V7c0 4-3 7.200-7 7.200S1 11 1 7V2.700c0-.6.4-1 1-1z" /><path d="M5 6.200l3 3 3-3" /></Line></Slot>
            <Slot $w={28}><Line w={1.7}><path d="M8 .9l2.200 4.600 5 .7-3.600 3.500.9 5.100L8 12.400l-4.500 2.400.9-5.100L.8 6.200l5-.7z" /></Line></Slot>
          </UrlBar>
          <Tools>
            <Slot $color="#3f9bff"><Line><path d="M8 1v10M3 6.700L8 11.500l5-4.800M2 15h12" /></Line></Slot>
            <Slot><Line strokeLinecap="butt"><path d="M1.500 1v14M5 1v14M8.500 1v14M10.500 2l4.500 13" /></Line></Slot>
            <Slot><Line w={1.7}><rect x=".8" y="2" width="14.400" height="12" rx="2" /><path d="M7.500 2v12M3 5h2M3 7.500h2M3 10h2" strokeWidth="1.200" /></Line></Slot>
            <Slot><svg width="20" height="20" viewBox="0 0 20 20"><circle cx="10" cy="11" r="7" fill="none" stroke="#c1c1c3" strokeWidth="1.300" /><circle cx="10" cy="9" r="2.800" fill="#c1c1c3" /><path d="M5.300 14c2-3 7.500-3 9.500 0-2 3.500-7.500 3.500-9.500 0z" fill="#c1c1c3" /><circle cx="17" cy="3" r="3" fill="#00aef5" /></svg></Slot>
            <Slot><Shield fill="#0a0a0b" tick="#505052" s={15} /></Slot>
            <Slot><svg width="16" height="16"><path d="M5 0h6l5 5v6l-5 5H5l-5-5V5z" fill="#a9a9aa" /><text x="8" y="10.800" fontSize="7" fontFamily="Inter" fontWeight="800" fill="#fff" textAnchor="middle">ABP</text></svg></Slot>
            <Slot $color="#77777a"><Line w={1.5}><path d="M6 12.500H1.500V2.500h12V7M1.500 4.500h12" /><rect x="7.500" y="8" width="7.500" height="7" fill="#77777a" /><path d="M9.500 10l3.500 3.500M13 10l-3.500 3.500" stroke="#222" /></Line></Slot>
            <Slot><svg width="16" height="16" viewBox="0 0 16 16"><circle cx="8" cy="8" r="7.200" fill="#fff" stroke="#3b7fd6" strokeWidth="1.500" /><circle cx="8" cy="8" r="4.700" fill="#eee" stroke="#a83232" strokeWidth="1.500" /><path d="M4.800 4.800l6.400 6.400" stroke="#a83232" strokeWidth="1.500" /></svg></Slot>
            <Slot><svg width="16" height="16" viewBox="0 0 16 16" fill="none" stroke="#f2f2f2" strokeWidth="2"><path d="M3 1v8h4M7 2h8M11 2v8M.5 13.500c2-2 3 1 5 0s3-1.500 5 0 3 0 5-.5" /></svg></Slot>
            <Slot $w={7}><VLine $h={34} /></Slot>
            <Slot $w={35}><Line s={14} w={2}><path d="M1 2.500h14M1 8h14M1 13.500h14" /></Line></Slot>
          </Tools>
        </NavBar>
        <Bookmarks>
          {bookmarks.map(([t, w, icon, ls]) => <Bookmark key={t} $w={w} $ls={ls}>{icon}{t}</Bookmark>)}
          <Bookmark $push $ls={-0.38}><Folder />Weitere Lesezeichen</Bookmark>
        </Bookmarks>
        <SiteHeader>
          <Logo preserveAspectRatio="none" />
          <Brand>BookStack</Brand>
          <LoginLink><svg width="14" height="12" viewBox="0 0 14 12" fill="none" stroke="#fff" strokeWidth="1.300"><path d="M.7 3.500V1h12.600v10H.7V8.500M.7 6h7.500M6.300 3.800L8.500 6 6.300 8.200" /></svg>Anmelden</LoginLink>
        </SiteHeader>
        <Main>
          <Card>
            <Title>Anmelden</Title>
            <Label>E-Mail</Label>
            <Field>admin</Field>
            <Label>Passwort</Label>
            <Field $focus><Dot /><Dot /><Dot /><Dot /><Dot /></Field>
            <Forgot>Passwort vergessen?</Forgot>
            <FormFooter><Check /><Remember>Angemeldet bleiben</Remember><Submit type="button">ANMELDEN</Submit></FormFooter>
          </Card>
        </Main>
      </Browser>

      <FinderWindow>
        <FileThumb />
        <FinderCell $w={480}>Bildschirmfoto 2020-08-23 um 09.57.12</FinderCell>
        <FinderCell $w={224} $dim>23.08.2020, 09:57</FinderCell>
        <FinderCell $w={54} $dim>1,8 MB</FinderCell>
        <FinderCell $w={14} $dim>PI</FinderCell>
      </FinderWindow>
      <CodeWindow>
        <StatusBar>
          <StatusItem $w={20}><VscError size={16} /></StatusItem>
          <StatusItem $w={14}>0</StatusItem>
          <StatusItem $w={20}><VscWarning size={16} /></StatusItem>
          <StatusItem $w={20}>0</StatusItem>
          <StatusItem $push $w={62}>UTF-8</StatusItem>
          <StatusItem $w={35}>LF</StatusItem>
          <StatusItem $w={57}>YAML</StatusItem>
          <StatusItem $w={36}><VscFeedback size={16} /></StatusItem>
          <StatusItem $w={17}><VscBellDot size={16} /></StatusItem>
        </StatusBar>
      </CodeWindow>

      <Keyboard>
        <KeyboardTop>
          <svg width="12" height="12" viewBox="0 0 12 12"><path d="M1.500 1.500l9 9M10.500 1.500l-9 9" stroke="#50585d" strokeWidth="3.200" /></svg>
          <KLogo>kaspersky</KLogo>
        </KeyboardTop>
        <KeyRow>
          <Letters chars="^1234567890ß´" dead="^´" />
          <Key $w={66.5}><KeyIcon $m="16px 0 0 30px" width="22" height="12"><path d="M21 6H1M10 1L1 6l9 5" /></KeyIcon></Key>
        </KeyRow>
        <Middle>
          <div>
            <KeyRow>
              <Key $w={66.5}><KeyIcon $m="16px 0 0 -6.500px" width="23" height="12"><path d="M0 6h20M13 1l8 5-8 5M21.500 0v12" /></KeyIcon></Key>
              <Letters chars="qwertzuiopü+" />
            </KeyRow>
            <KeyRow>
              <Key $w={76.5}><KeyIcon $m="2px 0 0 -3px" width="20" height="26"><circle cx="2" cy="2.500" r="1.600" fill="#888" /><path d="M10 7l7 7h-3.500v4h-7v-4H3zM6.500 19.500h7v4h-7zM6.500 21.500h7" /></KeyIcon></Key>
              <Letters chars="asdfghjklöä#" />
            </KeyRow>
          </div>
          <Enter width="39" height="72" viewBox="0 0 39 72">
            <defs><linearGradient id="enter" x2="0" y2="1"><stop stopColor="#fefefe" /><stop offset="1" stopColor="#cfcfcf" /></linearGradient></defs>
            <path d="M4.500.5h30a4 4 0 014 4v63a4 4 0 01-4 4h-20a4 4 0 01-4-4V31H4.500a4 4 0 01-4-4V4.500a4 4 0 014-4z" fill="url(#enter)" stroke="#6d7173" />
            <path d="M27 15.500h8v8H13M20 18.500l-8 5 8 5" fill="none" stroke="#999" strokeWidth="1.100" />
          </Enter>
        </Middle>
        <KeyRow>
          <Key $w={56.5}><Shift m="13px 0 0 -1px" /></Key>
          <Letters chars="<yxcvbnm,.-" />
          <Key $w={91.5}><Shift m="13px 0 0 54px" /></Key>
        </KeyRow>
        <KeyRow>
          <Key $w={109.5} $h={31}><Flag /><Lang>Deutsch</Lang></Key>
          <Option />
          <Key $w={209.5} />
          <Option />
        </KeyRow>
      </Keyboard>

      <Dock>
        {dock.map(([icon, run], i) => <DockItem key={i} $running={run}>{icon}</DockItem>)}
        <Divider $l={11.5} $r={10.5} />
        <DockItem><FindMy /></DockItem>
        <DockItem><Docker /></DockItem>
        <DockItem $running><Docker /></DockItem>
        <Divider $l={10} $r={10.5} />
        <DockItem><Zip /></DockItem>
        <DockItem><Trash /></DockItem>
      </Dock>
    </Screen>
  );
}
